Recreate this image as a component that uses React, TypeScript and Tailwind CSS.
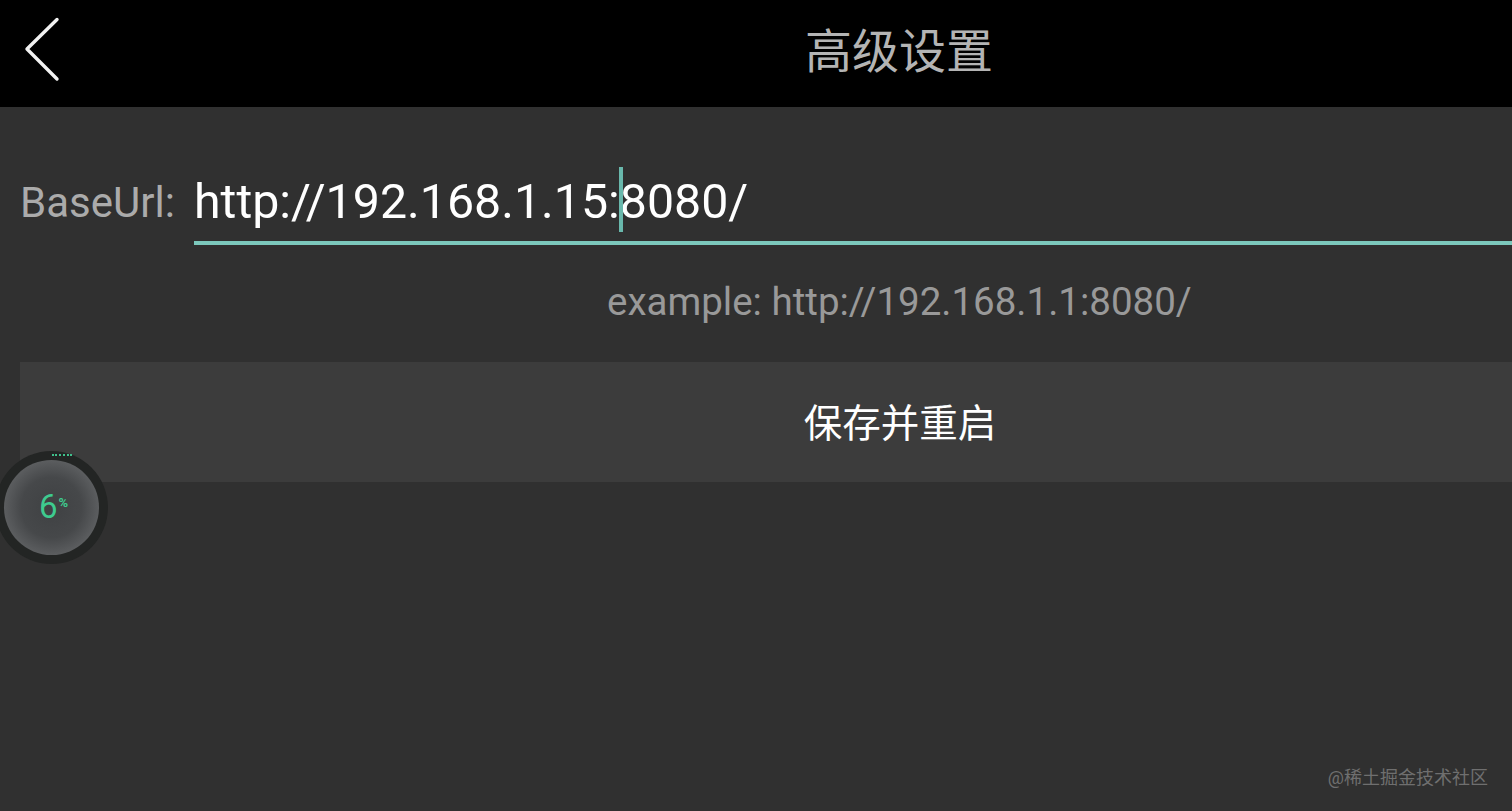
import React from "react";

const roboto = { fontFamily: 'Roboto, "Noto Sans CJK SC", sans-serif' };

function FloatBall() {
  return (
    <div className="absolute left-[-5px] top-[451px] w-[113px] h-[113px] rounded-full bg-[#232524] flex items-center justify-center">
      <div className="absolute left-[57px] top-[3px] w-[20px] h-[2px] border-t-[2px] border-dotted border-[#3fc08c]" />
      <div className="w-[95px] h-[95px] rounded-full bg-[radial-gradient(circle,#3f4143_0%,#46484a_45%,#5f6163_75%,#8b8d8f_100%)] flex items-start justify-center pt-[27px] pl-[4px]">
        <span className="text-[33px] leading-[40px] text-[#3ecb8f]">6</span>
        <span className="text-[13px] leading-[13px] mt-[9px] ml-[1px] text-[#3ecb8f] font-bold">%</span>
      </div>
    </div>
  );
}

export default function App() {
  return (
    <div className="relative w-[1512px] h-[811px] overflow-hidden bg-[#303030]" style={roboto}>
      <header className="relative h-[107px] bg-black flex items-center justify-center pl-[286px]">
        <button className="absolute left-[24px] top-[16px]">
          <svg width="38" height="66" viewBox="0 0 38 66" fill="none" stroke="#f2f2f2" strokeWidth="3.4" strokeLinecap="round" strokeLinejoin="round">
            <path d="M33 3.5 L3 33 L33 63" />
          </svg>
        </button>
        <h1 className="text-[47px] leading-[60px] text-[#b4b4b4] pb-[3px]">高级设置</h1>
      </header>

      <div className="pl-[20px] pt-[59px]">
        <div className="flex items-start h-[79px]">
          <span className="w-[174px] pt-[12px] text-[42px] leading-[50px] text-[#ababab]">BaseUrl:</span>
          <div className="relative flex-1 h-[79px] border-b-[4px] border-[#7cc8bc]">
            <span className="block text-[48.3px] leading-[71px] text-white">http://192.168.1.15:8080/</span>
            <span className="absolute left-[425px] top-[1px] w-[4px] h-[65px] bg-[#69b8ac]" />
          </div>
        </div>

        <p className="mt-[32px] ml-[587px] text-[38.5px] leading-[50px] text-[#999999]">example: http://192.168.1.1:8080/</p>

        <button className="block mt-[35px] w-full h-[120px] bg-[#3c3c3c] text-[38.5px] leading-[50px] text-white pl-[268px] pt-[3px]">
          保存并重启
        </button>
      </div>

      <FloatBall />

      <span className="absolute right-[24px] bottom-[21px] text-[18px] leading-[24px] text-[#6f6f6f]">@稀土掘金技术社区</span>
    </div>
  );
}
